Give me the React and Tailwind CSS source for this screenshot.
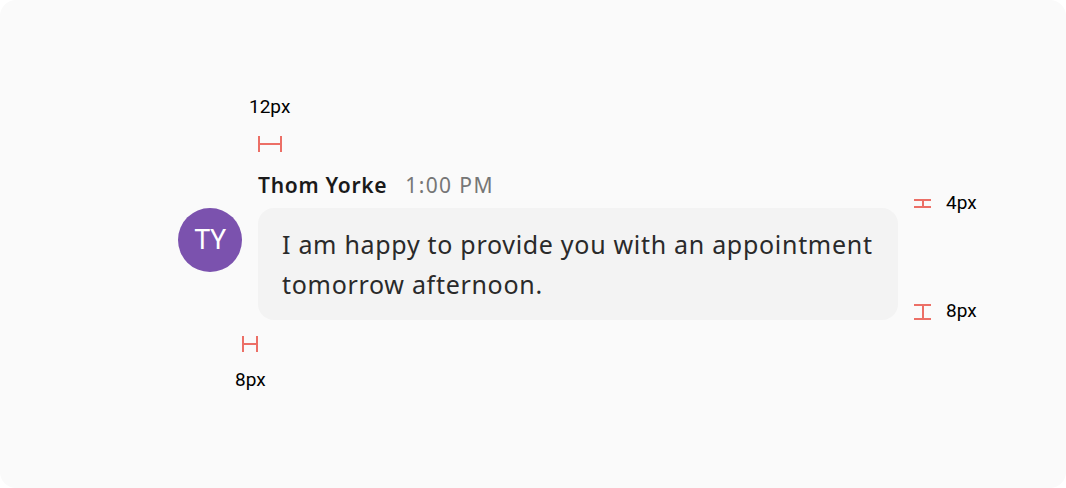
export default function App() {
  const red = "bg-[#ec6f66]";
  return (
    <div className="w-[1066px] h-[488px] bg-white">
      <div className="relative w-full h-full rounded-[16px] bg-[#fafafa] pt-[170px] pl-[178px] font-['Noto_Sans',sans-serif]">
        <div className="flex gap-[16px]">
          <div className="mt-[38px] w-[64px] h-[64px] rounded-full bg-[#7b52ae] flex items-center justify-center text-white text-[27px] font-['Roboto',sans-serif] tracking-[-0.5px]">
            TY
          </div>
          <div className="flex flex-col gap-[8px]">
            <div className="flex items-center gap-[18px] h-[30px] text-[21px] leading-[30px]">
              <span className="font-semibold text-[#1a1a1a] tracking-[0.7px]">Thom Yorke</span>
              <span className="text-[#767676] tracking-[1.4px]">1:00 PM</span>
            </div>
            <div className="w-[640px] rounded-[16px] bg-[#f3f3f3] px-[24px] py-[16px] text-[25px] leading-[40px] tracking-[0.7px] text-[#2a2a2a]">
              I am happy to provide you with an appointment tomorrow afternoon.
            </div>
          </div>
        </div>

        {/* Annotations */}
        <div className="absolute left-[249px] top-[95px] text-[19px] leading-[24px] text-black font-['Roboto',sans-serif]">12px</div>
        <div className="absolute left-[258px] top-[136px] w-[24px] h-[16px] flex items-center">
          <div className={`w-[2px] h-full ${red}`} />
          <div className={`flex-1 h-[2px] ${red}`} />
          <div className={`w-[2px] h-full ${red}`} />
        </div>

        <div className="absolute left-[914px] top-[199px] w-[17px] h-[9px] flex flex-col items-center">
          <div className={`w-full h-[2px] ${red}`} />
          <div className={`w-[2px] flex-1 ${red}`} />
          <div className={`w-full h-[2px] ${red}`} />
        </div>
        <div className="absolute left-[946px] top-[191px] text-[19px] leading-[24px] text-black font-['Roboto',sans-serif]">4px</div>

        <div className="absolute left-[914px] top-[304px] w-[17px] h-[16px] flex flex-col items-center">
          <div className={`w-full h-[2px] ${red}`} />
          <div className={`w-[2px] flex-1 ${red}`} />
          <div className={`w-full h-[2px] ${red}`} />
        </div>
        <div className="absolute left-[946px] top-[299px] text-[19px] leading-[24px] text-black font-['Roboto',sans-serif]">8px</div>

        <div className="absolute left-[242px] top-[336px] w-[16px] h-[16px] flex items-center">
          <div className={`w-[2px] h-full ${red}`} />
          <div className={`flex-1 h-[2px] ${red}`} />
          <div className={`w-[2px] h-full ${red}`} />
        </div>
        <div className="absolute left-[235px] top-[368px] text-[19px] leading-[24px] text-black font-['Roboto',sans-serif]">8px</div>
      </div>
    </div>
  );
}
